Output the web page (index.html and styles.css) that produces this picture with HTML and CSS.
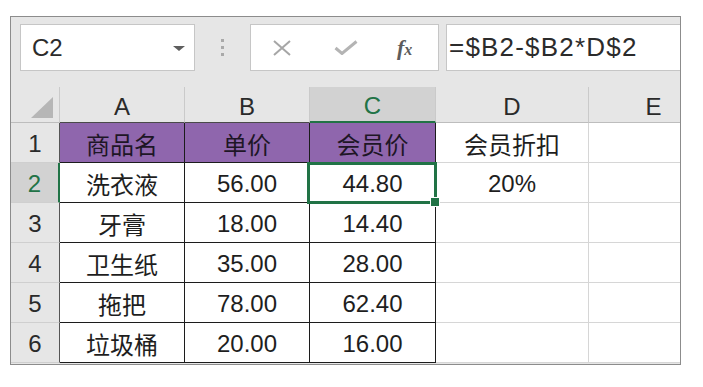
FILE: index.html
```html
<!DOCTYPE html>
<html lang="zh-CN">
<head>
  <meta charset="UTF-8">
  <title>会员价 - 工作表</title>
  <link rel="stylesheet" href="styles.css">
</head>
<body>
  <div class="sheet">
    <div class="fbar">
      <div class="namebox">
        <span>C2</span>
        <span class="caret"></span>
      </div>
      <div class="grip"><i></i><i></i><i></i></div>
      <div class="fnbox">
        <svg class="ic-x" width="18" height="16" viewBox="0 0 18 16"><path d="M1 1 L17 15 M17 1 L1 15"/></svg>
        <svg class="ic-ok" width="24" height="15" viewBox="0 0 24 15"><path d="M1.5 8 L8 13.5 L22.5 1.5"/></svg>
        <span class="fx">f<small>x</small></span>
      </div>
      <div class="formula">=$B2-$B2*D$2</div>
    </div>

    <div class="grid">
      <div class="corner"><svg width="22" height="21" viewBox="0 0 22 21"><polygon points="22,0 22,21 0,21"/></svg></div>
      <div class="colhd edge">A</div>
      <div class="colhd edge">B</div>
      <div class="colhd active">C</div>
      <div class="colhd">D</div>
      <div class="colhd">E</div>

      <div class="rowhd">1</div>
      <div class="cell data title">商品名</div>
      <div class="cell data title">单价</div>
      <div class="cell data title">会员价</div>
      <div class="cell">会员折扣</div>
      <div class="cell"></div>

      <div class="rowhd active">2</div>
      <div class="cell data">洗衣液</div>
      <div class="cell data">56.00</div>
      <div class="cell data selected">44.80</div>
      <div class="cell">20%</div>
      <div class="cell"></div>

      <div class="rowhd">3</div>
      <div class="cell data">牙膏</div>
      <div class="cell data">18.00</div>
      <div class="cell data">14.40</div>
      <div class="cell"></div>
      <div class="cell"></div>

      <div class="rowhd">4</div>
      <div class="cell data">卫生纸</div>
      <div class="cell data">35.00</div>
      <div class="cell data">28.00</div>
      <div class="cell"></div>
      <div class="cell"></div>

      <div class="rowhd">5</div>
      <div class="cell data">拖把</div>
      <div class="cell data">78.00</div>
      <div class="cell data">62.40</div>
      <div class="cell"></div>
      <div class="cell"></div>

      <div class="rowhd">6</div>
      <div class="cell data">垃圾桶</div>
      <div class="cell data">20.00</div>
      <div class="cell data">16.00</div>
      <div class="cell"></div>
      <div class="cell"></div>
    </div>
  </div>
</body>
</html>
```

FILE: styles.css
```css
* {
  box-sizing: border-box;
}

body {
  margin: 0;
  background: #fff;
  font-family: 'Liberation Sans', 'Noto Sans CJK SC', sans-serif;
  color: #1e1e1e;
}

.sheet {
  width: 671px;
  height: 349px;
  margin: 16px 0 0 10px;
  border: 1px solid #8c8c8c;
  background: #e6e6e6;
  overflow: hidden;
}

/* formula bar */
.fbar {
  display: flex;
  align-items: flex-start;
  height: 70px;
  padding: 7px 0 0 9px;
}

.namebox, .fnbox, .formula {
  height: 47px;
  background: #fff;
  border: 1px solid #c6c6c6;
  display: flex;
  align-items: center;
}

.namebox {
  width: 175px;
  padding: 0 9px 0 11px;
  justify-content: space-between;
  font-size: 24px;
  color: #2b2b2b;
}

.caret {
  width: 0;
  height: 0;
  border-left: 6px solid transparent;
  border-right: 6px solid transparent;
  border-top: 5px solid #5e5e5e;
  margin-top: 2px;
}

.grip {
  width: 55px;
  height: 47px;
  display: flex;
  flex-direction: column;
  align-items: center;
  justify-content: center;
  gap: 4px;
}

.grip i {
  width: 3px;
  height: 3px;
  background: #a9a9a9;
}

.fnbox {
  width: 189px;
  margin-right: 7px;
  padding-left: 22px;
}

.ic-x path {
  stroke: #a6a6a6;
  stroke-width: 2;
  fill: none;
}

.ic-ok {
  margin-left: 43px;
}

.ic-ok path {
  stroke: #b4b4b4;
  stroke-width: 3;
  fill: none;
}

.fx {
  margin-left: 39px;
  font-family: 'Liberation Serif', serif;
  font-style: italic;
  font-weight: bold;
  font-size: 22px;
  color: #5c5c5c;
}

.fx small {
  font-size: 16px;
}

.formula {
  flex: 1;
  margin-right: -3px;
  padding-left: 2px;
  font-size: 26px;
  letter-spacing: 1.2px;
  color: #2b2b2b;
}

/* worksheet */
.grid {
  display: grid;
  grid-template-columns: 49px 125px 125px 126px 153px 130px;
  grid-template-rows: 36px repeat(6, 40px);
  width: 708px;
}

.grid > div {
  display: flex;
  align-items: center;
  justify-content: center;
}

.corner {
  justify-content: flex-end !important;
  align-items: flex-end !important;
  padding: 0 6px 4px 0;
  border-right: 1px solid #cacaca;
  border-bottom: 1px solid #bdbdbd;
}

.corner polygon {
  fill: #b6b6b6;
}

.colhd {
  font-size: 24px;
  color: #2a2a2a;
  padding-top: 4px;
  border-right: 1px solid #cacaca;
  border-bottom: 1px solid #bdbdbd;
}

.colhd.edge {
  border-bottom-color: #4a4a4a;
}

.colhd.active {
  background: #d2d2d2;
  color: #217346;
  border-bottom: 2px solid #217346;
}

.rowhd {
  font-size: 24px;
  color: #2a2a2a;
  padding-top: 2px;
  border-right: 1px solid #555;
  border-bottom: 1px solid #cfcfcf;
}

.rowhd.active {
  background: #d2d2d2;
  color: #217346;
  border-right: 2px solid #217346;
}

.cell {
  background: #fff;
  font-size: 24px;
  padding-top: 2px;
  border-right: 1px solid #d6d6d6;
  border-bottom: 1px solid #d6d6d6;
}

.cell.data {
  border-right-color: #1c1c1c;
  border-bottom-color: #1c1c1c;
}

.cell.title {
  background: #8f66ad;
  color: #1e1626;
}

.cell.selected {
  position: relative;
}

.cell.selected::after {
  content: "";
  position: absolute;
  left: -3px;
  top: -1px;
  right: -2px;
  bottom: -2px;
  border: 3px solid #217346;
}

.cell.selected::before {
  content: "";
  position: absolute;
  right: -5px;
  bottom: -5px;
  width: 8px;
  height: 8px;
  background: #217346;
  border: 1px solid #fff;
  z-index: 1;
}
```
